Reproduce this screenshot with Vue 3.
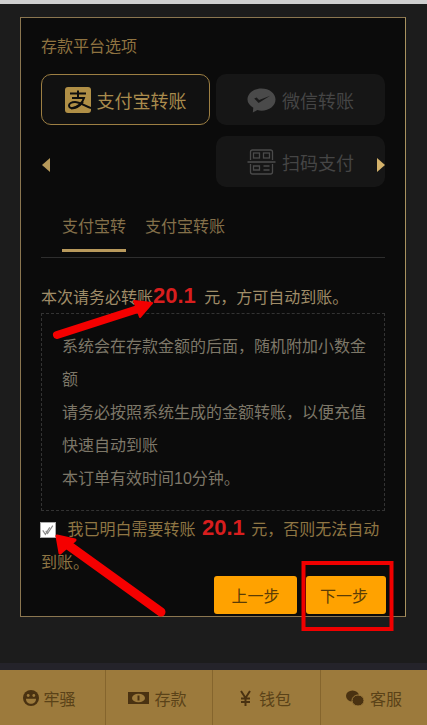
<template>
  <div class="page">
    <div class="top-strip"></div>
    <main class="main">
      <section class="panel">
        <h2 class="title">存款平台选项</h2>

        <div class="platforms">
          <div class="arrow-left"></div>
          <div class="arrow-right"></div>
          <button class="pay active">
            <svg class="pay-icon" viewBox="0 0 26 26">
              <rect width="26" height="26" rx="3" fill="#b08f46" />
              <path d="M5 6.500h16M13 3.500v7M7 11h12c-1.500 5-6 9-13 10.500" fill="none" stroke="#0e0e0e" stroke-width="2" />
              <path d="M26 21c-6-1.500-11-6-16-6-3.500 0-6 1.500-6 3.500s2 3 4 2.800c4-.3 7-3 10-6.300" fill="none" stroke="#0e0e0e" stroke-width="2" />
            </svg>
            <span>支付宝转账</span>
          </button>
          <button class="pay">
            <svg class="pay-icon wide" viewBox="0 0 30 26">
              <path d="M15 1c8 0 14.500 5 14.500 11.500S23 24 15 24c-1.500 0-3-.2-4.300-.6L6 26l.5-5C3 18.900.5 15.900.5 12.500.5 6 7 1 15 1z" fill="#4a4a4a" />
              <path d="M7.500 11.500l4.500 4.500L24 8.500l-11.500 4.500-2.500-2.500z" fill="#1a1a1a" />
            </svg>
            <span>微信转账</span>
          </button>
          <button class="pay">
            <svg class="pay-icon wide" viewBox="0 0 28 26" fill="none" stroke="#4a4a4a" stroke-width="1.300">
              <path d="M3 11V3a2 2 0 0 1 2-2h18a2 2 0 0 1 2 2v8M3 15v8a2 2 0 0 0 2 2h18a2 2 0 0 0 2-2v-8" />
              <path d="M0 13h28" stroke-width="1.600" />
              <rect x="6" y="4" width="6" height="5" />
              <rect x="16" y="4" width="6" height="5" />
              <path d="M6 17h6v4H6zM16 17h6M16 21h6" />
            </svg>
            <span>扫码支付</span>
          </button>
        </div>

        <div class="tabs">
          <div class="tab current">支付宝转</div>
          <div class="tab">支付宝转账</div>
        </div>

        <p class="notice">本次请务必转账<b class="amount big">20.1</b> 元，方可自动到账。</p>

        <div class="tips">
          <p>系统会在存款金额的后面，随机附加小数金额</p>
          <p>请务必按照系统生成的金额转账，以便充值快速自动到账</p>
          <p>本订单有效时间10分钟。</p>
        </div>

        <p class="confirm">
          <span class="check">
            <svg viewBox="0 0 16 16" fill="none" stroke="#8a8a8a" stroke-width="1.300">
              <path d="M2 8.500l3 4.500 5-8" />
              <path d="M5.500 9l2 3 6-9" />
            </svg>
          </span>
          我已明白需要转账 <b class="amount">20.1</b> 元，否则无法自动到账。
        </p>

        <div class="actions">
          <button class="step">上一步</button>
          <button class="step">下一步</button>
        </div>
      </section>
    </main>

    <footer class="footer">
      <div v-for="item in navItems" :key="item.label" class="nav-item" :class="item.icon">
        <svg class="nav-icon" :viewBox="item.box" v-html="item.svg"></svg>
        <span>{{ item.label }}</span>
      </div>
    </footer>

    <!-- 截图上的红色标注 -->
    <svg class="marks" viewBox="0 0 427 725">
      <g fill="#f50000" stroke="#f50000" stroke-linejoin="round">
        <path d="M57 335L141 308" stroke-width="8" stroke-linecap="round" fill="none" />
        <path d="M134 301L152 303L140 317z" stroke-width="2" />
        <path d="M161 612L68 545" stroke-width="9" stroke-linecap="round" fill="none" />
        <path d="M57 536L75 540L60 553z" stroke-width="3" />
      </g>
      <rect x="303.500" y="563" width="88" height="66" fill="none" stroke="#f00000" stroke-width="4" />
    </svg>
  </div>
</template>

<script setup>
const navItems = [
  {
    label: '牢骚',
    icon: 'smile',
    box: '0 0 16 16',
    svg: '<circle cx="8" cy="8" r="8" fill="#4a3211"/><circle cx="5.200" cy="5.500" r="1.400" fill="#9c7a3c"/><circle cx="10.800" cy="5.500" r="1.400" fill="#9c7a3c"/><path d="M3 8.800h10c0 3.200-2.200 5-5 5s-5-1.800-5-5z" fill="#9c7a3c"/>'
  },
  {
    label: '存款',
    icon: 'money',
    box: '0 0 21 14',
    svg: '<rect y="1" width="21" height="12" fill="#4a3211"/><ellipse cx="10.500" cy="7" rx="6.500" ry="4.300" fill="#9c7a3c"/><rect x="9.500" y="4.500" width="2" height="5" fill="#4a3211"/>'
  },
  {
    label: '钱包',
    icon: 'yen',
    box: '0 0 11 16',
    svg: '<path d="M1 1l4.500 7L10 1M5.500 8v8M1 8.500h9M1 12h9" fill="none" stroke="#4a3211" stroke-width="2"/>'
  },
  {
    label: '客服',
    icon: 'wechat',
    box: '0 0 18 16',
    svg: '<ellipse cx="6.500" cy="6" rx="6.500" ry="5.500" fill="#4a3211"/><ellipse cx="12" cy="10.500" rx="6" ry="5.500" fill="#4a3211" stroke="#9c7a3c" stroke-width="1"/>'
  }
]
</script>

<style>
html,
body {
  margin: 0;
  background: #1c1c1c;
}
</style>

<style scoped>
.page {
  position: relative;
  width: 427px;
  height: 725px;
  overflow: hidden;
  display: flex;
  flex-direction: column;
  background: #1c1c1c;
  font-family: "Liberation Sans", "Noto Sans CJK SC", sans-serif;
}
.top-strip {
  height: 4px;
  background: #cfcfcf;
}
.main {
  flex: 1;
  padding: 13px 21px 0 20px;
}
.panel {
  box-sizing: border-box;
  height: 600px;
  padding: 0 20px;
  background: #0b0b0b;
  border: 1.500px solid #8b7650;
  border-right-color: #a8925f;
}
.title {
  margin: 19px 0 0;
  height: 20px;
  font-size: 16px;
  line-height: 20px;
  font-weight: 400;
  color: #8f7340;
}
.platforms {
  position: relative;
  margin-top: 17px;
  display: grid;
  grid-template-columns: 169px 169px;
  column-gap: 6px;
  row-gap: 11px;
}
.pay {
  box-sizing: border-box;
  height: 51px;
  display: flex;
  align-items: center;
  justify-content: center;
  gap: 6px;
  padding: 0;
  border: 1px solid transparent;
  border-radius: 10px;
  background: #161616;
  font-family: inherit;
  font-size: 18px;
  color: #454545;
}
.pay.active {
  border: 1.500px solid #9d7f43;
  background: #111;
  color: #a98b4d;
}
.pay:nth-child(5) {
  grid-column: 2;
}
.pay-icon {
  width: 26px;
  height: 26px;
}
.pay-icon.wide {
  width: 29px;
}
.arrow-left,
.arrow-right {
  position: absolute;
  top: 84px;
  width: 0;
  height: 0;
  border-top: 7px solid transparent;
  border-bottom: 7px solid transparent;
}
.arrow-left {
  left: 1px;
  border-right: 8px solid #b6995a;
}
.arrow-right {
  left: 336px;
  border-left: 8px solid #d4b26b;
}
.tabs {
  margin-top: 22px;
  height: 49px;
  display: flex;
  gap: 19px;
  padding-left: 21px;
  border-bottom: 1px solid #2e2e2e;
  box-sizing: border-box;
}
.tab {
  box-sizing: border-box;
  height: 43px;
  padding-top: 6px;
  font-size: 16px;
  line-height: 24px;
  color: #84704a;
}
.tab.current {
  border-bottom: 3px solid #b8995c;
}
.notice {
  margin: 24px 0 0;
  height: 30px;
  font-size: 16px;
  line-height: 28px;
  color: #a08d68;
  white-space: nowrap;
}
.amount {
  margin: 0 2px;
  font-size: 22px;
  color: #d81e1e;
}
.amount.big {
  margin: 0 4px 0 0;
}
.tips {
  box-sizing: border-box;
  margin-top: 1px;
  height: 198px;
  padding: 16px 18px 0 20px;
  border: 1px dashed #333;
  font-size: 16px;
  line-height: 33px;
  color: #7d7768;
}
.tips p {
  margin: 0;
}
.confirm {
  margin: 0;
  height: 66px;
  font-size: 16px;
  line-height: 33px;
  color: #8f7644;
}
.check {
  display: inline-block;
  box-sizing: border-box;
  width: 16px;
  height: 16px;
  margin: 0 7px 0 -1px;
  vertical-align: -3px;
  background: #fff;
  border: 1px solid #aaa;
}
.check svg {
  display: block;
  width: 100%;
  height: 100%;
}
.actions {
  margin: -1px -1px 0 0;
  display: flex;
  justify-content: flex-end;
  gap: 9px;
}
.step {
  width: 83px;
  height: 38px;
  padding: 0;
  border: 0;
  border-radius: 3px;
  background: #ffa200;
  font-family: inherit;
  font-size: 16px;
  color: #5a3c06;
}
.step:last-child {
  width: 80px;
  padding-right: 4px;
}
.footer {
  height: 62px;
  flex: none;
  display: grid;
  grid-template-columns: 106px 107px 108px 106px;
  box-sizing: border-box;
  border-top: 7px solid #24232a;
  background: #9c7a3c;
}
.nav-item {
  display: flex;
  align-items: center;
  justify-content: center;
  font-size: 16px;
  color: #5a4218;
  border-right: 1px solid #85652d;
}
.nav-item:last-child {
  border-right: 0;
}
.nav-item.smile {
  gap: 4px;
  padding-right: 6px;
}
.nav-item.money {
  gap: 5px;
  padding-right: 3px;
}
.nav-item.yen {
  gap: 8px;
  padding-right: 2px;
}
.nav-item.wechat {
  gap: 6px;
}
.nav-icon {
  height: 16px;
}
.smile .nav-icon {
  width: 16px;
}
.money .nav-icon {
  width: 21px;
  height: 14px;
}
.yen .nav-icon {
  width: 11px;
}
.wechat .nav-icon {
  width: 18px;
}
.marks {
  position: absolute;
  inset: 0;
  width: 427px;
  height: 725px;
  pointer-events: none;
}
</style>
